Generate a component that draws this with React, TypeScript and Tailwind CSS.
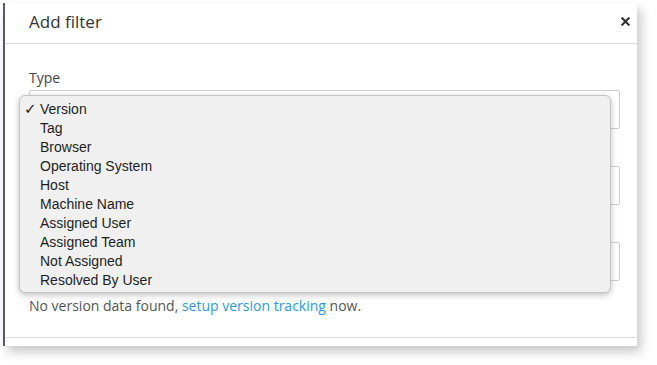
import React from "react";

const options = [
  "Version",
  "Tag",
  "Browser",
  "Operating System",
  "Host",
  "Machine Name",
  "Assigned User",
  "Assigned Team",
  "Not Assigned",
  "Resolved By User",
];

export default function App() {
  return (
    <div className="relative w-[657px] h-[365px] bg-white pt-[3px] pl-[3px] overflow-hidden font-['Open_Sans',sans-serif]">
      {/* modal */}
      <div className="w-[634px] h-[343px] bg-white border-l-2 border-[#555a66] shadow-[4px_6px_10px_rgba(0,0,0,0.22)] flex flex-col">
        <div className="h-[41px] shrink-0 border-b border-[#dcdcdc] flex items-center justify-between pl-[24px] pr-[6px]">
          <h1 className="text-[17px] text-[#333] leading-none -mt-[4px]">Add filter</h1>
          <button className="w-[12px] h-[12px] flex items-center justify-center -mt-[4px]">
            <svg width="9" height="9" viewBox="0 0 10 10">
              <path d="M1.5 1.5 L8.5 8.5 M8.5 1.5 L1.5 8.5" stroke="#333" strokeWidth="2.4" strokeLinecap="square" />
            </svg>
          </button>
        </div>

        <div className="flex-1 pl-[24px] pr-[17px] pt-[24px] text-[14px] text-[#555]">
          <label className="block leading-[20px] text-[#444]">Type</label>
          <div className="mt-[2px] h-[39px] border border-[#cfcfcf] rounded-[2px] bg-white" />
          <div className="mt-[37px] h-[39px] border border-[#cfcfcf] rounded-[2px] bg-white" />
          <div className="mt-[37px] h-[39px] border border-[#cfcfcf] rounded-[2px] bg-white" />
          <p className="mt-[15px] leading-[20px]">
            No version data found, <a className="text-[#2a9be0]">setup version tracking</a> now.
          </p>
        </div>

        <div className="h-[9px] shrink-0 border-t border-[#dcdcdc]" />
      </div>

      {/* native select menu */}
      <ul className="absolute left-[19px] top-[95px] w-[592px] h-[198px] py-[4px] bg-[#f0f0f0] border border-[#c4c4c4] rounded-[6px] shadow-[0_2px_6px_rgba(0,0,0,0.25)] font-['Liberation_Sans',Arial,sans-serif] text-[14px] text-[#1e1e1e]">
        {options.map((o, i) => (
          <li key={o} className="relative h-[19px] leading-[19px] pl-[20px]">
            {i === 0 && (
              <span className="absolute left-[4px] top-0 text-[15px] font-['DejaVu_Sans',sans-serif] font-bold">✓</span>
            )}
            {o}
          </li>
        ))}
      </ul>
    </div>
  );
}
